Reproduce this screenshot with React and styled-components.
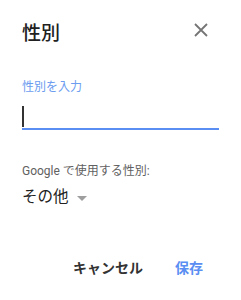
import * as React from 'react';
import styled, { createGlobalStyle } from 'styled-components';

const GlobalStyle = createGlobalStyle`
  html, body {
    margin: 0;
    padding: 0;
    background: #ffffff;
  }
  body {
    font-family: Roboto, "Noto Sans CJK JP", "Noto Sans", sans-serif;
  }
`;

const Dialog = styled.div`
  width: 241px;
  height: 300px;
  box-sizing: border-box;
  padding: 0 22px;
  display: flex;
  flex-direction: column;
  background: #ffffff;
`;

const Header = styled.div`
  display: flex;
  justify-content: space-between;
  align-items: center;
  height: 40px;
  margin-top: 11px;
`;

const Title = styled.h1`
  margin: 0;
  font-size: 19px;
  font-weight: 500;
  color: #212121;
`;

const CloseButton = styled.button`
  border: 0;
  background: none;
  padding: 0;
  margin-right: -2px;
  width: 40px;
  height: 40px;
  display: flex;
  align-items: center;
  justify-content: center;
  margin-top: -2px;
`;

const Field = styled.div`
  margin-top: 28px;
  display: flex;
  flex-direction: column;
`;

const Label = styled.label`
  font-size: 12px;
  line-height: 16px;
  color: #6b9cf0;
`;

const Input = styled.div`
  margin-top: 10px;
  height: 23px;
  border-bottom: 2px solid #5a8ef2;
  display: flex;
  align-items: flex-end;
`;

const Caret = styled.span`
  width: 2px;
  height: 21px;
  background: #333333;
  margin-bottom: 1px;
`;

const Section = styled.div`
  margin-top: 33px;
`;

const Caption = styled.div`
  font-size: 12px;
  line-height: 16px;
  color: #616161;
`;

const Select = styled.div`
  margin-top: 8px;
  display: flex;
  align-items: center;
  gap: 8px;
  font-size: 15.5px;
  line-height: 20px;
  color: #212121;
`;

const Arrow = styled.span`
  width: 0;
  height: 0;
  border-left: 5px solid transparent;
  border-right: 5px solid transparent;
  border-top: 5px solid #9e9e9e;
  margin-top: 2px;
`;

const Actions = styled.div`
  margin-top: auto;
  margin-bottom: 23px;
  display: flex;
  justify-content: flex-end;
  gap: 32px;
  padding-right: 16px;
`;

const ActionButton = styled.button`
  border: 0;
  background: none;
  padding: 0;
  font-family: inherit;
  font-size: 14px;
  font-weight: 700;
  color: ${(props) => (props.variant === 'primary' ? '#5a8ef2' : '#333333')};
`;

export default function App() {
  return (
    <React.Fragment>
      <GlobalStyle />
      <Dialog>
        <Header>
          <Title>性別</Title>
          <CloseButton aria-label="閉じる">
            <svg width="14" height="14" viewBox="0 0 14 14">
              <path d="M1 1L13 13M13 1L1 13" stroke="#757575" strokeWidth="1.8" />
            </svg>
          </CloseButton>
        </Header>
        <Field>
          <Label>性別を入力</Label>
          <Input>
            <Caret />
          </Input>
        </Field>
        <Section>
          <Caption>Google で使用する性別:</Caption>
          <Select>
            その他
            <Arrow />
          </Select>
        </Section>
        <Actions>
          <ActionButton>キャンセル</ActionButton>
          <ActionButton variant="primary">保存</ActionButton>
        </Actions>
      </Dialog>
    </React.Fragment>
  );
}
